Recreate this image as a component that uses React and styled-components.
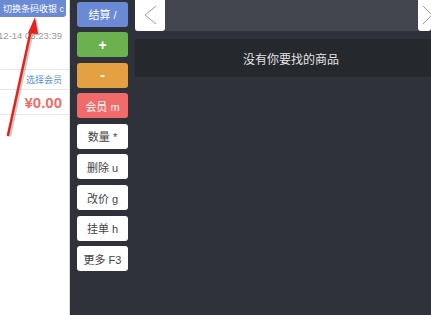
import styled, { createGlobalStyle } from 'styled-components';

const GlobalStyle = createGlobalStyle`
  html, body {
    margin: 0;
    padding: 0;
    width: 431px;
    height: 315px;
    overflow: hidden;
    background: #ffffff;
    font-family: "Liberation Sans", "Noto Sans CJK SC", Arial, sans-serif;
  }
`;

const Screen = styled.div`
  position: relative;
  display: flex;
  width: 431px;
  height: 315px;
  overflow: hidden;
`;

const Cart = styled.div`
  width: 69px;
  flex-shrink: 0;
  border-right: 1px solid #dcdcdc;
  background: #ffffff;
  overflow: hidden;
`;

const ScanButton = styled.div`
  display: flex;
  justify-content: flex-end;
  align-items: center;
  width: 66px;
  height: 17px;
  padding-right: 2px;
  box-sizing: border-box;
  background: #6b8ad6;
  border-radius: 0 0 3px 0;
  color: #ffffff;
  font-size: 9px;
  white-space: nowrap;
  overflow: hidden;
`;

const CartRow = styled.div`
  display: flex;
  justify-content: flex-end;
  align-items: ${(p) => p.$align || 'center'};
  height: ${(p) => p.$height}px;
  padding: ${(p) => p.$pad || '0 7px 0 0'};
  box-sizing: border-box;
  border-bottom: 1px solid #e6e6e6;
  white-space: nowrap;
  overflow: hidden;
`;

const Stamp = styled.span`
  font-size: 9.5px;
  color: #9a9a9a;
`;

const Member = styled.span`
  font-size: 9px;
  color: #5a8fd8;
`;

const Price = styled.span`
  font-size: 15px;
  font-weight: bold;
  color: #f26b6b;
`;

const Actions = styled.div`
  display: flex;
  flex-direction: column;
  gap: 5.6px;
  width: 65px;
  flex-shrink: 0;
  padding: 1.5px 0 0 7px;
  box-sizing: border-box;
  background: #2f323a;
`;

const tones = {
  blue: ['#6b8ad6', '#ffffff'],
  green: ['#6cb14f', '#ffffff'],
  orange: ['#e5a043', '#ffffff'],
  red: ['#f36a6a', '#ffffff'],
  white: ['#ffffff', '#444444'],
};

const ActionButton = styled.div`
  display: flex;
  align-items: center;
  justify-content: center;
  width: 51px;
  height: 25px;
  border-radius: 3px;
  background: ${(p) => tones[p.$tone][0]};
  color: ${(p) => tones[p.$tone][1]};
  font-size: ${(p) => (p.$big ? 14 : 11)}px;
  font-weight: ${(p) => (p.$big ? 'bold' : 'normal')};
  white-space: nowrap;
`;

const Main = styled.div`
  flex: 1;
  display: flex;
  flex-direction: column;
  background: #2f323a;
`;

const CategoryBar = styled.div`
  display: flex;
  justify-content: space-between;
  height: 31px;
  background: #42454d;
`;

const Arrow = styled.div`
  display: flex;
  align-items: center;
  justify-content: center;
  width: ${(p) => p.$width}px;
  height: 31px;
  background: #ffffff;
  border-radius: 0 0 3px 3px;
  overflow: hidden;
`;

const Empty = styled.div`
  display: flex;
  align-items: center;
  justify-content: center;
  height: 38px;
  margin-top: 8px;
  padding-left: 16px;
  background: #25282d;
  color: #e2e2e2;
  font-size: 12px;
`;

const Pointer = styled.svg`
  position: absolute;
  left: 0;
  top: 0;
  pointer-events: none;
`;

const buttons = [
  { label: '结算 /', tone: 'blue' },
  { label: '+', tone: 'green', big: true },
  { label: '-', tone: 'orange', big: true },
  { label: '会员 m', tone: 'red' },
  { label: '数量 *', tone: 'white' },
  { label: '删除 u', tone: 'white' },
  { label: '改价 g', tone: 'white' },
  { label: '挂单 h', tone: 'white' },
  { label: '更多 F3', tone: 'white' },
];

export default function App() {
  return (
    <>
      <GlobalStyle />
      <Screen>
        <Cart>
          <ScanButton>切换条码收银 c</ScanButton>
          <CartRow $height={53} $align="flex-start" $pad="13px 7px 0 0">
            <Stamp>2022-12-14 03:23:39</Stamp>
          </CartRow>
          <CartRow $height={20}>
            <Member>选择会员</Member>
          </CartRow>
          <CartRow $height={25}>
            <Price>¥0.00</Price>
          </CartRow>
        </Cart>
        <Actions>
          {buttons.map((b) => (
            <ActionButton key={b.label} $tone={b.tone} $big={b.big}>
              {b.label}
            </ActionButton>
          ))}
        </Actions>
        <Main>
          <CategoryBar>
            <Arrow $width={30}>
              <svg width="30" height="31" viewBox="0 0 30 31">
                <polyline points="21,6 10,15 21,24" fill="none" stroke="#9a9a9a" strokeWidth="1" />
              </svg>
            </Arrow>
            <Arrow $width={13}>
              <svg width="13" height="31" viewBox="0 0 13 31">
                <polyline points="5,6 14,15 5,24" fill="none" stroke="#9a9a9a" strokeWidth="1" />
              </svg>
            </Arrow>
          </CategoryBar>
          <Empty>没有你要找的商品</Empty>
        </Main>
        <Pointer width="60" height="150" viewBox="0 0 60 150">
          <g opacity="0.35" transform="translate(1.5,1.5)">
            <line x1="8" y1="135" x2="31" y2="30" stroke="#666" strokeWidth="3" />
            <polygon points="35,17 28,33 38,34" fill="#666" />
          </g>
          <line x1="8" y1="135" x2="31" y2="30" stroke="#e8211b" strokeWidth="2.5" strokeLinecap="round" />
          <polygon points="35,17 28,33 38,34" fill="#e8211b" />
        </Pointer>
      </Screen>
    </>
  );
}
